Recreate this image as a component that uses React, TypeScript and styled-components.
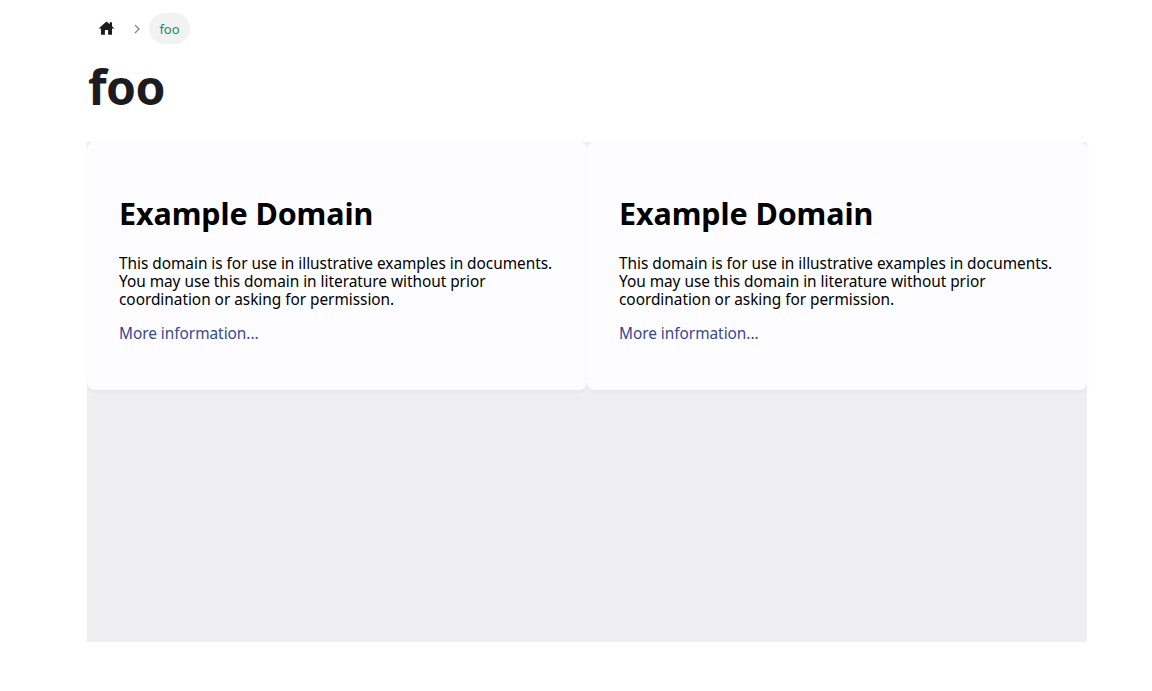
import React from "react";
import styled, { createGlobalStyle } from "styled-components";

const GlobalStyle = createGlobalStyle`
  html, body {
    margin: 0;
    padding: 0;
    background: #ffffff;
    font-family: "Noto Sans", "Open Sans", sans-serif;
  }
`;

const Page = styled("div")`
  width: 1000px;
  padding: 13px 0 49px 87px;
`;

const Breadcrumbs = styled("nav")`
  display: flex;
  align-items: center;
  height: 31px;
`;

const HomeLink = styled("a")`
  display: flex;
  align-items: center;
  justify-content: center;
  width: 38px;
  height: 31px;
  color: #1c1b1f;
`;

const Separator = styled("span")`
  display: flex;
  width: 24px;
  justify-content: center;
  color: #8a8a8e;
`;

const Crumb = styled("span")`
  display: flex;
  align-items: center;
  height: 31px;
  padding: 0 10.5px;
  border-radius: 16px;
  background: #f2f2f2;
  color: #1b8a5e;
  font-size: 13px;
  letter-spacing: -0.1px;
`;

const Title = styled("h1")`
  margin: 11px 0 23px 1px;
  height: 64px;
  font-size: 48px;
  line-height: 64px;
  font-weight: 700;
  color: #1c1b1f;
  letter-spacing: -0.6px;
`;

const Board = styled("div")`
  display: grid;
  grid-template-columns: 1fr 1fr;
  align-items: start;
  height: 500px;
  background: #efeff1;
`;

const Card = styled("article")`
  box-sizing: border-box;
  height: 248px;
  padding: 50px 32px 0;
  border-radius: 8px;
  background: #fdfdff;
  box-shadow: 0 2px 4px rgba(0, 0, 0, 0.04);
  color: #000000;
`;

const Heading = styled("h2")`
  margin: 0 0 21px;
  font-size: 30.5px;
  line-height: 42px;
  font-weight: 700;
  letter-spacing: -0.1px;
`;

const Body = styled("p")`
  margin: 0 0 16px;
  font-size: 15.4px;
  line-height: 18px;
  letter-spacing: -0.03px;
`;

const MoreLink = styled("a")`
  color: #38488f;
  text-decoration: none;
`;

function DomainCard() {
  return (
    <Card>
      <Heading>Example Domain</Heading>
      <Body>
        This domain is for use in illustrative examples in documents.
        <br />
        You may use this domain in literature without prior
        <br />
        coordination or asking for permission.
      </Body>
      <Body>
        <MoreLink href="#">More information...</MoreLink>
      </Body>
    </Card>
  );
}

export default function App() {
  return (
    <>
      <GlobalStyle />
      <Page>
        <Breadcrumbs>
          <HomeLink href="#">
            <svg width="19" height="19" viewBox="0 0 24 24" fill="currentColor">
              <path d="M19 9.3V4h-3v2.6L12 3 2 12h3v8h5v-6h4v6h5v-8h3z" />
            </svg>
          </HomeLink>
          <Separator>
            <svg width="12" height="12" viewBox="0 0 12 12" fill="none" stroke="currentColor" strokeWidth="1.4">
              <path d="M4 2l4 4-4 4" />
            </svg>
          </Separator>
          <Crumb>foo</Crumb>
        </Breadcrumbs>
        <Title>foo</Title>
        <Board>
          <DomainCard />
          <DomainCard />
        </Board>
      </Page>
    </>
  );
}
